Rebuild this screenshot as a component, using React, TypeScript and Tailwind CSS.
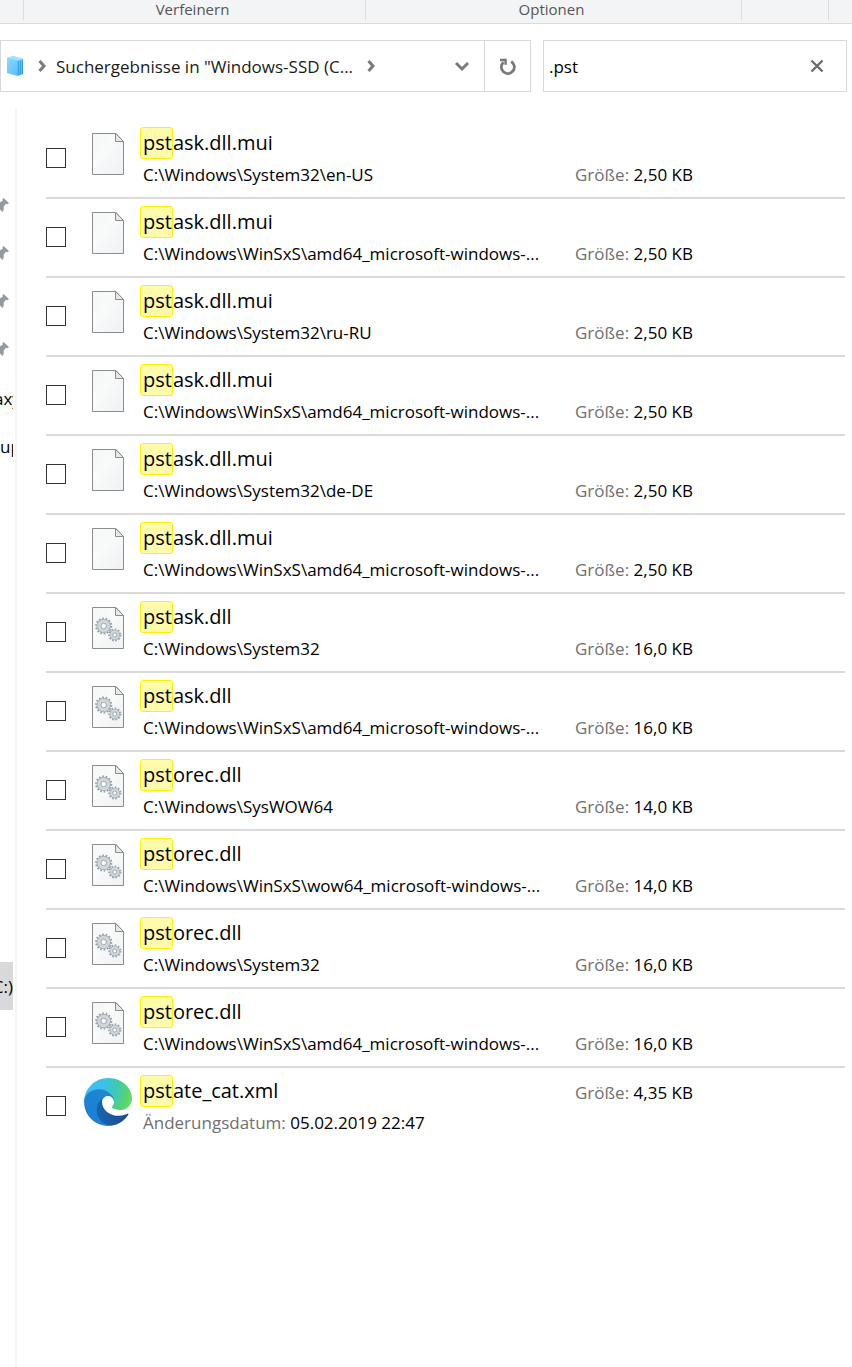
import React, { useState } from 'react';
import clsx from 'clsx';

interface ResultItem {
  name: string;
  path?: string;
  modified?: string;
  size: string;
  kind: 'file' | 'dll' | 'edge';
}

const MATCH = 'pst';

const results: ResultItem[] = [
  { name: 'pstask.dll.mui', path: 'C:\\Windows\\System32\\en-US', size: '2,50 KB', kind: 'file' },
  { name: 'pstask.dll.mui', path: 'C:\\Windows\\WinSxS\\amd64_microsoft-windows-...', size: '2,50 KB', kind: 'file' },
  { name: 'pstask.dll.mui', path: 'C:\\Windows\\System32\\ru-RU', size: '2,50 KB', kind: 'file' },
  { name: 'pstask.dll.mui', path: 'C:\\Windows\\WinSxS\\amd64_microsoft-windows-...', size: '2,50 KB', kind: 'file' },
  { name: 'pstask.dll.mui', path: 'C:\\Windows\\System32\\de-DE', size: '2,50 KB', kind: 'file' },
  { name: 'pstask.dll.mui', path: 'C:\\Windows\\WinSxS\\amd64_microsoft-windows-...', size: '2,50 KB', kind: 'file' },
  { name: 'pstask.dll', path: 'C:\\Windows\\System32', size: '16,0 KB', kind: 'dll' },
  { name: 'pstask.dll', path: 'C:\\Windows\\WinSxS\\amd64_microsoft-windows-...', size: '16,0 KB', kind: 'dll' },
  { name: 'pstorec.dll', path: 'C:\\Windows\\SysWOW64', size: '14,0 KB', kind: 'dll' },
  { name: 'pstorec.dll', path: 'C:\\Windows\\WinSxS\\wow64_microsoft-windows-...', size: '14,0 KB', kind: 'dll' },
  { name: 'pstorec.dll', path: 'C:\\Windows\\System32', size: '16,0 KB', kind: 'dll' },
  { name: 'pstorec.dll', path: 'C:\\Windows\\WinSxS\\amd64_microsoft-windows-...', size: '16,0 KB', kind: 'dll' },
  { name: 'pstate_cat.xml', modified: '05.02.2019 22:47', size: '4,35 KB', kind: 'edge' },
];

const Gear = ({ cx, cy, r, teeth }: { cx: number; cy: number; r: number; teeth: number }) => (
  <g fill="none">
    <circle cx={cx} cy={cy} r={r} stroke="#96a1a8" strokeWidth="2.2" strokeDasharray={`${(Math.PI * r) / teeth} ${(Math.PI * r) / teeth}`} />
    <circle cx={cx} cy={cy} r={r * 0.62} stroke="#9ba6ad" strokeWidth={r * 0.66} />
    <circle cx={cx} cy={cy} r={r * 0.62} stroke="#d0d7db" strokeWidth={r * 0.46} />
    <circle cx={cx} cy={cy} r={r * 0.36} fill="#fafbfb" stroke="#98a3aa" strokeWidth="0.8" />
  </g>
);

const PageIcon = ({ gears = false }: { gears?: boolean }) => (
  <svg width="32" height="42" viewBox="0 0 32 42" aria-hidden="true">
    <defs>
      <linearGradient id="sheet" x1="0" y1="0" x2="1" y2="1">
        <stop offset="0" stopColor="#f5f6f7" />
        <stop offset="0.4" stopColor="#f9fafa" />
        <stop offset="1" stopColor="#eff1f3" />
      </linearGradient>
    </defs>
    <path d="M.5.5H24L31.5 8.5V41.5H.5Z" fill="url(#sheet)" stroke="#8a8c8e" />
    <path d="M23.5.5V8.5H31.5Z" fill="#e6e8ea" stroke="#8a8c8e" />
    {gears && (
      <>
        <Gear cx={11.7} cy={19} r={7.5} teeth={14} />
        <Gear cx={22.8} cy={28} r={5.5} teeth={11} />
      </>
    )}
  </svg>
);

const EdgeIcon = () => (
  <svg width="48" height="48" viewBox="0 0 256 256" aria-hidden="true">
    <defs>
      <linearGradient id="edgeDark" x1="63" y1="178" x2="241" y2="178" gradientUnits="userSpaceOnUse">
        <stop offset="0" stopColor="#1766ae" />
        <stop offset="1" stopColor="#1b4c8c" />
      </linearGradient>
      <linearGradient id="edgeBlue" x1="157" y1="100" x2="46" y2="222" gradientUnits="userSpaceOnUse">
        <stop offset="0" stopColor="#2189cf" />
        <stop offset="0.5" stopColor="#1d82d4" />
        <stop offset="1" stopColor="#1a80d8" />
      </linearGradient>
      <radialGradient id="edgeTop" cx="26" cy="46" r="250" gradientUnits="userSpaceOnUse">
        <stop offset="0" stopColor="#3fbdf6" />
        <stop offset="0.35" stopColor="#3bc2e2" />
        <stop offset="0.6" stopColor="#3ec9b4" />
        <stop offset="0.85" stopColor="#5ad568" />
        <stop offset="1" stopColor="#6be26a" />
      </radialGradient>
    </defs>
    <path d="M231 190.500c-3.400 1.800-6.900 3.400-10.500 4.700a101.700 101.700 0 0 1-35.900 6.500c-47.300 0-88.500-32.500-88.500-74.300a31.500 31.500 0 0 1 16.400-27.300c-42.800 1.800-53.800 46.400-53.800 72.500 0 74 68.100 81.400 82.800 81.400 7.900 0 19.800-2.300 27-4.600l1.300-.4a128.300 128.300 0 0 0 66.600-52.800 4 4 0 0 0-5.400-5.700Z" fill="url(#edgeDark)" />
    <path d="M105.700 241.400a79.200 79.200 0 0 1-22.700-21.300 80.700 80.700 0 0 1 29.500-120c3.200-1.500 8.500-4.100 15.600-4a32.400 32.400 0 0 1 25.700 13 31.900 31.900 0 0 1 6.300 18.700c0-.2 24.500-79.600-80-79.600-43.900 0-80 41.600-80 78.200a130.200 130.200 0 0 0 12.100 56 128 128 0 0 0 156.400 67 75.500 75.500 0 0 1-62.800-8Z" fill="url(#edgeBlue)" />
    <path d="M152.300 148.900c-.9 1-3.400 2.500-3.400 5.600 0 2.600 1.700 5.200 4.800 7.300 14.300 10 41.400 8.600 41.500 8.600a59.600 59.600 0 0 0 30.300-8.300 61.400 61.400 0 0 0 30.400-52.900c.3-22.400-8-37.300-11.300-43.900C223.500 23.900 177.700 0 128 0A128 128 0 0 0 0 126.200c.5-36.500 36.800-66 80-66 3.500 0 23.500.3 42 10a72.600 72.600 0 0 1 30.900 29.300c6.100 10.600 7.200 24.100 7.200 29.500 0 5.300-2.700 13.300-7.800 19.900Z" fill="url(#edgeTop)" />
  </svg>
);

const PinIcon = () => (
  <svg width="9" height="16" viewBox="0 0 9 16" aria-hidden="true">
    <path d="M3.500 1 9 6 7.500 7.300 6 6.800 3.800 9.500 3.600 13.500 2.500 15 0 12.500V5.500L2.800 3.500 2.600 2Z" fill="#8f9ca5" />
  </svg>
);

const DriveIcon = () => (
  <svg width="16" height="20" viewBox="0 0 16 20" aria-hidden="true">
    <defs>
      <linearGradient id="drive" x1="0" y1="0" x2="1" y2="1">
        <stop offset="0" stopColor="#8edcff" />
        <stop offset="1" stopColor="#4fb5f6" />
      </linearGradient>
    </defs>
    <path d="M0 2 6 0 16 3V18L10.500 20 0 17Z" fill="url(#drive)" />
    <path d="M0 2 6 0 16 3 10.500 4.500Z" fill="#9fe2ff" />
    <path d="M11.300 5V19.500M13.400 4.500V19M15.500 4V18" stroke="#2f9de6" strokeWidth="1" />
  </svg>
);

const Chevron = ({ down = false }: { down?: boolean }) => (
  <svg width="14" height="14" viewBox="0 0 14 14" className={clsx('shrink-0', down && 'rotate-90')} aria-hidden="true">
    <path d={down ? 'M4 1 10 7 4 13' : 'M4.500 2 9 7 4.500 12'} fill="none" stroke="#7a7a7a" strokeWidth="3" />
  </svg>
);

const RefreshIcon = () => (
  <svg width="18" height="18" viewBox="0 0 18 18" aria-hidden="true">
    <path d="M12.200 4.500A6.500 6.500 0 1 1 4.500 5.200" fill="none" stroke="#7a7a7a" strokeWidth="2.800" />
    <path d="M1 1.800H7.800V7.800H5.400V4.200H1Z" fill="#7a7a7a" />
  </svg>
);

const ResultRow: React.FC<{ item: ResultItem; index: number }> = ({ item, index }) => {
  const size = (
    <span className="self-end whitespace-nowrap">
      <span className="text-[#707070]">Größe:</span> {item.size}
    </span>
  );

  return (
    <li className="flex border-b-2 border-[#dadada] pt-[7px] pb-[7px] last:border-b-0">
      <input
        id={`result-${index}`}
        type="checkbox"
        className="mt-[21px] size-5 shrink-0 appearance-none border border-[#333] bg-white checked:bg-[#0078d7]"
      />
      <div className="flex w-[77px] shrink-0 justify-center pl-[7px]">
        <div className={item.kind === 'edge' ? 'mt-[3px]' : 'mt-[6px]'}>
          {item.kind === 'edge' ? <EdgeIcon /> : <PageIcon gears={item.kind === 'dll'} />}
        </div>
      </div>
      <div className="grid min-w-0 flex-1 grid-cols-[432px_1fr] grid-rows-[33px_30px] text-[17px] leading-[30px]">
        <label htmlFor={`result-${index}`} className="text-[20px] leading-8 whitespace-nowrap">
          <mark className="-ml-[3px] inline-block h-8 rounded-[3px] border border-[#fff200] bg-[#fffbaa] pl-[2px] leading-[30px] text-inherit">
            {MATCH}
          </mark>
          {item.name.slice(MATCH.length)}
        </label>
        {item.modified ? size : <span />}
        <span className="whitespace-nowrap">
          {item.modified ? (
            <>
              <span className="text-[#707070]">Änderungsdatum:</span> {item.modified}
            </>
          ) : (
            item.path
          )}
        </span>
        {!item.modified && size}
      </div>
    </li>
  );
};

const App: React.FC = () => {
  const [query, setQuery] = useState('.pst');

  return (
    <div className="flex min-h-screen flex-col overflow-hidden bg-white font-['Open_Sans','Noto_Sans',sans-serif] text-black">
      <div className="flex h-6 border-b border-[#d9dadb] bg-[#f3f4f6] pb-[3px] text-center text-[15px] leading-[18px] text-[#555]">
        <div className="w-6 border-r border-[#dcdddf]" />
        <div className="w-[342px] border-r border-[#dcdddf] pr-1">Verfeinern</div>
        <div className="w-[376px] border-r border-[#dcdddf] pr-1">Optionen</div>
        <div className="w-[87px] border-r border-[#dcdddf]" />
      </div>

      <div className="mt-4 flex h-[52px] gap-3 pr-[5px] text-[17px]">
        <div className="flex min-w-0 flex-1 border border-[#d9d9d9]">
          <div className="flex min-w-0 flex-1 items-center pl-[6px]">
            <DriveIcon />
            <span className="ml-3">
              <Chevron />
            </span>
            <span className="mr-[11px] ml-[7px] pt-[2px] whitespace-nowrap text-[#1a1a1a]">Suchergebnisse in "Windows-SSD (C...</span>
            <Chevron />
          </div>
          <button type="button" aria-label="Verlauf" className="flex w-11 items-center justify-center">
            <Chevron down />
          </button>
          <button type="button" aria-label="Aktualisieren" className="flex w-[46px] items-center justify-center border-l border-[#d9d9d9]">
            <RefreshIcon />
          </button>
        </div>
        <div className="flex w-[304px] shrink-0 border border-[#d9d9d9]">
          <input
            type="text"
            aria-label="Suchen"
            value={query}
            onChange={(e) => setQuery(e.target.value)}
            className="min-w-0 flex-1 pt-[2px] pl-[5px] outline-none"
          />
          <button type="button" aria-label="Suche löschen" onClick={() => setQuery('')} className="flex w-[58px] items-center justify-center">
            <svg width="14" height="14" viewBox="0 0 14 14" aria-hidden="true">
              <path d="M1.500 1.500 12.500 12.500M12.500 1.500 1.500 12.500" stroke="#6a6a6a" strokeWidth="2.300" />
            </svg>
          </button>
        </div>
      </div>

      <div className="mt-4 flex flex-1">
        <nav className="w-[17px] shrink-0 border-r-2 border-[#f5f5f5] pt-[73px] text-[17px]">
          <div className="w-[13px] overflow-hidden">
            {[0, 1, 2, 3].map((i) => (
              <div key={i} className="flex h-12 items-center">
                <PinIcon />
              </div>
            ))}
            <div className="-ml-[6px] flex h-12 items-center pt-1">axy</div>
            <div className="-ml-[6px] flex h-12 items-center pt-1">tup</div>
            <div className="mt-[493px] flex h-12 items-center justify-end bg-[#d9d9d9] pt-[2px]">C:)</div>
          </div>
        </nav>
        <ul className="min-w-0 flex-1 pt-3 pr-[7px] pl-[29px]">
          {results.map((item, i) => (
            <ResultRow key={i} item={item} index={i} />
          ))}
        </ul>
      </div>
    </div>
  );
};

export default App;
